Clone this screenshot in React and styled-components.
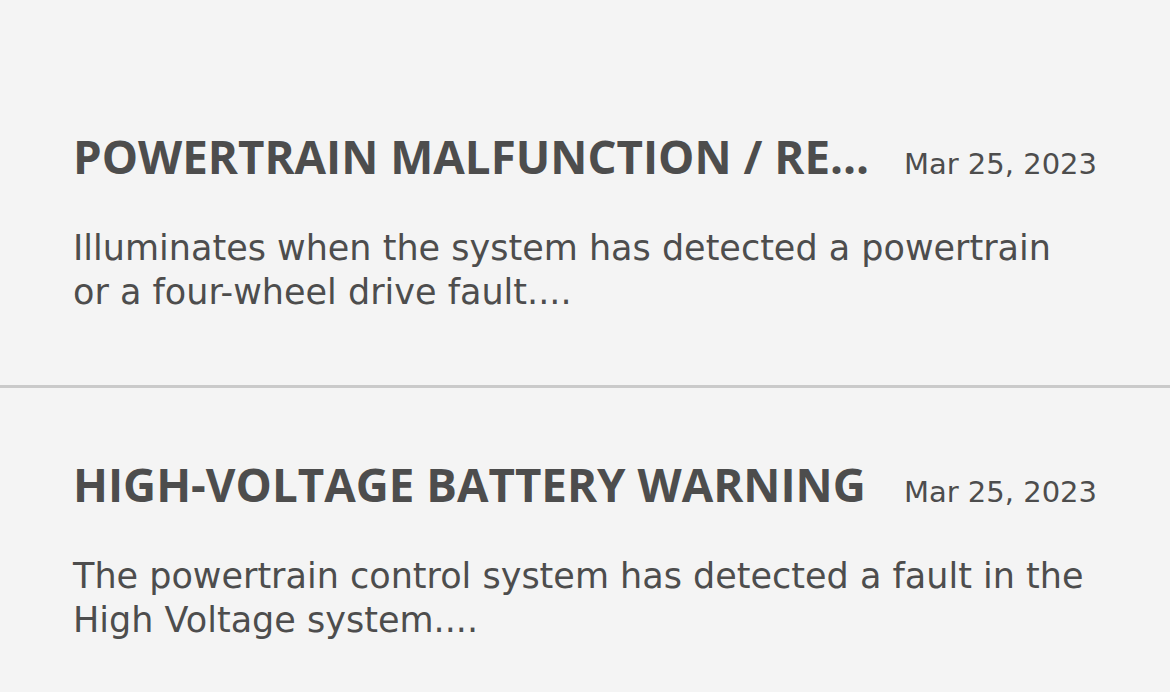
import React from 'react'
import styled, {createGlobalStyle} from 'styled-components'

const GlobalStyle = createGlobalStyle`
  html, body {
    margin: 0;
    padding: 0;
    background: #f4f4f4;
  }
  body {
    font-family: "DejaVu Sans", "Liberation Sans", sans-serif;
    color: #4d4d4d;
  }
`

const List = styled.div`
  display: flex;
  flex-direction: column;
  padding-top: 126px;
`

const Item = styled.div`
  padding: 0 73px 71px 73px;
  border-bottom: 3px solid #cacaca;
  & + & {
    padding-top: 66px;
  }
  &:last-child {
    border-bottom: none;
  }
`

const Header = styled.div`
  display: flex;
  align-items: baseline;
  gap: 28px;
`

const Title = styled.h2`
  flex: 0 1 auto;
  min-width: 0;
  margin: 0;
  font-family: "Open Sans", sans-serif;
  font-weight: 700;
  font-size: 45.7px;
  line-height: 60px;
  white-space: nowrap;
  overflow: hidden;
  text-overflow: ellipsis;
`

const Date = styled.span`
  flex-shrink: 0;
  margin-left: auto;
  font-size: 29px;
  white-space: nowrap;
`

const Summary = styled.p`
  margin: 40px 0 0 0;
  font-size: 35px;
  line-height: 44px;
`

const warnings = [
  {
    title: 'POWERTRAIN MALFUNCTION / REDUCED POWER',
    date: 'Mar 25, 2023',
    text: 'Illuminates when the system has detected a powertrain or a four-wheel drive fault....',
  },
  {
    title: 'HIGH-VOLTAGE BATTERY WARNING',
    date: 'Mar 25, 2023',
    text: 'The powertrain control system has detected a fault in the High Voltage system....',
  },
]

export default function App() {
  return (
    <>
      <GlobalStyle />
      <List>
        {warnings.map((w, i) => (
          <Item key={i}>
            <Header>
              <Title>{w.title}</Title>
              <Date>{w.date}</Date>
            </Header>
            <Summary>{w.text}</Summary>
          </Item>
        ))}
      </List>
    </>
  )
}
